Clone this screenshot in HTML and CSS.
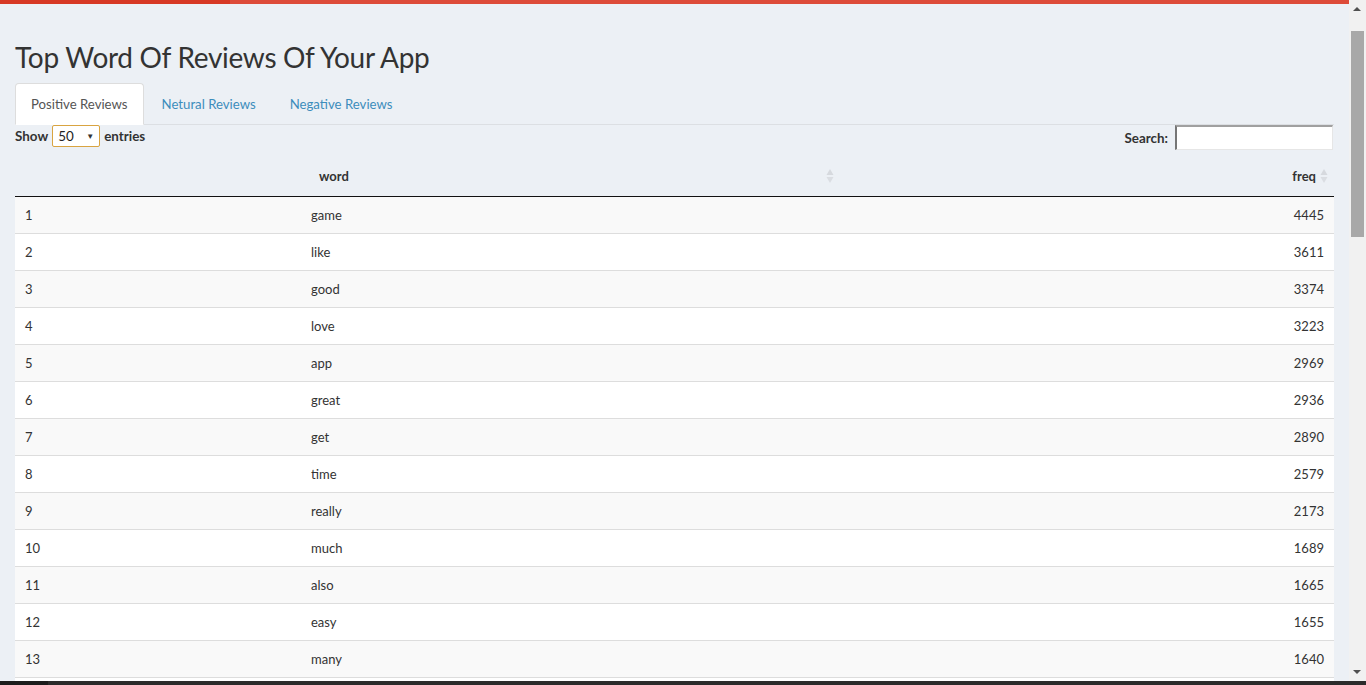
FILE: index.html
```html
<!DOCTYPE html>
<html>
<head>
<meta charset="utf-8">
<link rel="stylesheet" href="styles.css">
</head>
<body>
<div class="app">
  <div class="frame">
    <div class="page">
      <div class="topbar"><div class="logo-strip"></div><div class="nav-strip"></div></div>
      <div class="content">
        <h2 class="title">Top Word Of Reviews Of Your App</h2>
        <ul class="tabs">
          <li class="tab active"><a>Positive Reviews</a></li>
          <li class="tab"><a>Netural Reviews</a></li>
          <li class="tab"><a>Negative Reviews</a></li>
        </ul>
        <div class="dt-controls">
          <label class="length">Show <span class="select">50<span class="caret">▼</span></span> entries</label>
          <label class="search">Search: <span class="search-input"></span></label>
        </div>
        <table class="dt">
          <thead>
            <tr>
              <th class="c-idx"></th>
              <th class="c-word"><div class="th-in"><span>word</span><svg class="sort" width="8" height="16" viewBox="0 0 8 16"><path d="M4 1 L7.5 7 L0.5 7 Z" fill="#d6d9de"/><path d="M4 15 L7.5 9 L0.5 9 Z" fill="#dadde2"/></svg></div></th>
              <th class="c-freq"><div class="th-in right"><span>freq</span><svg class="sort" width="8" height="16" viewBox="0 0 8 16"><path d="M4 1 L7.5 7 L0.5 7 Z" fill="#d6d9de"/><path d="M4 15 L7.5 9 L0.5 9 Z" fill="#dadde2"/></svg></div></th>
            </tr>
          </thead>
          <tbody>
            <tr><td>1</td><td>game</td><td class="num">4445</td></tr>
            <tr><td>2</td><td>like</td><td class="num">3611</td></tr>
            <tr><td>3</td><td>good</td><td class="num">3374</td></tr>
            <tr><td>4</td><td>love</td><td class="num">3223</td></tr>
            <tr><td>5</td><td>app</td><td class="num">2969</td></tr>
            <tr><td>6</td><td>great</td><td class="num">2936</td></tr>
            <tr><td>7</td><td>get</td><td class="num">2890</td></tr>
            <tr><td>8</td><td>time</td><td class="num">2579</td></tr>
            <tr><td>9</td><td>really</td><td class="num">2173</td></tr>
            <tr><td>10</td><td>much</td><td class="num">1689</td></tr>
            <tr><td>11</td><td>also</td><td class="num">1665</td></tr>
            <tr><td>12</td><td>easy</td><td class="num">1655</td></tr>
            <tr><td>13</td><td>many</td><td class="num">1640</td></tr>
            <tr><td>&nbsp;</td><td></td><td class="num"></td></tr>
          </tbody>
        </table>
      </div>
    </div>
    <div class="scrollbar">
      <div class="arrow up"></div>
      <div class="thumb"></div>
      <div class="track-rest"></div>
      <div class="arrow down"></div>
    </div>
  </div>
  <div class="bottom-strip"><div class="bs-left"></div><div class="bs-right"></div></div>
</div>
</body>
</html>
```

FILE: styles.css
```css
* { box-sizing: border-box; }
html, body { margin: 0; padding: 0; }
body {
  width: 1366px;
  height: 685px;
  overflow: hidden;
  font-family: "Lato", "Liberation Sans", sans-serif;
  font-size: 14px;
  color: #333;
  background: #ecf0f5;
}
.app { display: flex; flex-direction: column; height: 685px; }
.frame { display: flex; flex: 1; min-height: 0; }
.page { flex: 1; display: flex; flex-direction: column; min-width: 0; overflow: hidden; }
.topbar { display: flex; height: 4px; flex-shrink: 0; }
.logo-strip { width: 230px; background: #d73925; }
.nav-strip { flex: 1; background: #dd4b39; }
.content { flex: 1; padding: 0 15px; overflow: hidden; }
.title {
  margin: 37px 0 0;
  font-size: 28px;
  font-weight: 400;
  line-height: 33px;
  color: #333;
  letter-spacing: -0.3px;
}
.tabs {
  list-style: none;
  margin: 9px 0 0;
  padding: 0;
  display: flex;
  border-bottom: 1px solid #dcdfe3;
}
.tab { margin-right: 2px; margin-bottom: -1px; }
.tab a {
  display: block;
  padding: 10px 15px;
  line-height: 20px;
  font-size: 13.2px;
  color: #3c8dbc;
  border: 1px solid transparent;
  border-radius: 4px 4px 0 0;
}
.tab.active a {
  background: #fff;
  color: #555;
  border-color: #ddd;
  border-bottom-color: transparent;
}
.dt-controls {
  display: flex;
  justify-content: space-between;
  align-items: flex-start;
  height: 25px;
  font-weight: 700;
  font-size: 13.4px;
  margin-right: 1px;
}
.length { display: flex; align-items: center; gap: 3px; height: 22px; }
.select {
  display: inline-flex;
  align-items: center;
  justify-content: space-between;
  width: 48px;
  height: 22px;
  margin: 0 1px;
  padding: 0 5px 0 5px;
  border: 1px solid #d9a441;
  border-radius: 2px;
  background: #fff;
  font-weight: 400;
  color: #222;
}
.caret { font-size: 8px; color: #333; }
.search { display: flex; align-items: center; gap: 7px; height: 25px; }
.search-input {
  width: 158px;
  height: 25px;
  background: #fff;
  border-style: solid;
  border-width: 2px 1px 1px 2px;
  border-color: #a0a0a0 #e6e6e6 #e6e6e6 #767676;
}
.dt {
  width: 100%;
  border-collapse: collapse;
  font-size: 13px;
}
.dt th {
  height: 46px;
  padding: 0;
  font-weight: 700;
  text-align: left;
  border-bottom: 1px solid #111;
  vertical-align: middle;
}
.th-in { display: flex; align-items: center; justify-content: space-between; padding: 6px 6px 0 18px; }
.th-in.right { justify-content: flex-end; gap: 4px; padding-right: 6px; }
.sort { display: block; }
.c-idx { width: 286px; }
.c-word { width: 539px; }
.dt td {
  padding: 8px 10px;
  line-height: 20px;
  border-top: 1px solid #ddd;
  background: #fff;
}
.dt tbody tr:first-child td { border-top: none; }
.dt tbody tr:nth-child(odd) td { background: #f9f9f9; }
.dt td.num { text-align: right; }
.scrollbar {
  width: 17px;
  background: #f1f1f1;
  display: flex;
  flex-direction: column;
  align-items: center;
}
.arrow { width: 17px; height: 17px; position: relative; }
.arrow.up::after {
  content: ""; position: absolute; left: 4px; top: 7px;
  border-left: 4.5px solid transparent; border-right: 4.5px solid transparent;
  border-bottom: 4px solid #505050;
}
.arrow.down::after {
  content: ""; position: absolute; left: 4px; top: 6px;
  border-left: 4.5px solid transparent; border-right: 4.5px solid transparent;
  border-top: 4px solid #505050;
}
.thumb { width: 13px; height: 206px; margin-top: 14px; background: #a8a8a8; }
.track-rest { flex: 1; }
.bottom-strip { display: flex; height: 4px; flex-shrink: 0; }
.bs-left { width: 48px; background: #1c1c1c; }
.bs-right { flex: 1; background: #2b2b2b; }
```
